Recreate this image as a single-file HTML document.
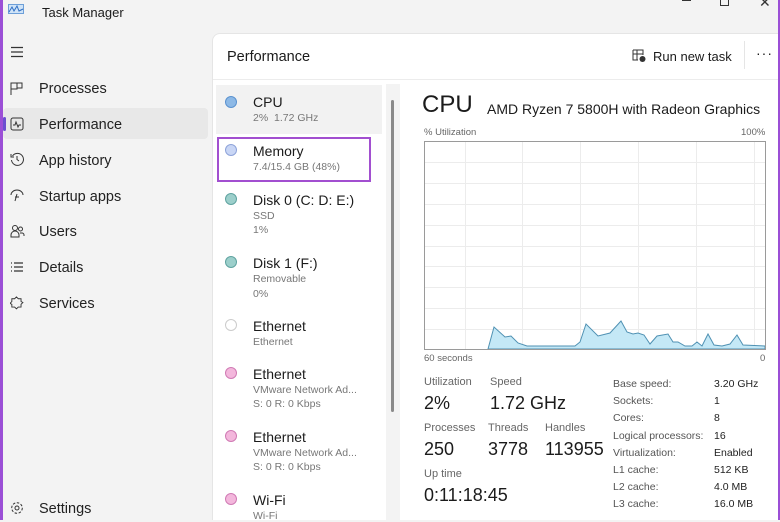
<!DOCTYPE html>
<html><head><meta charset="utf-8"><style>
*{margin:0;padding:0;box-sizing:border-box}
body{width:780px;height:520px;overflow:hidden;background:#f3f3f3;font-family:"Liberation Sans",sans-serif;color:#1b1b1b;position:relative}
.a{position:absolute;white-space:nowrap}
.nav{font-size:14.5px;color:#222}
.sub{font-size:10.5px;color:#777}
.it{font-size:14px;color:#1b1b1b}
.dot{position:absolute;width:12px;height:12px;border-radius:50%;left:225px}
.lbl{font-size:11px;color:#666}
.val{font-size:18px;color:#1b1b1b}
.k{font-size:10.5px;color:#555}
.v{font-size:10.5px;color:#222}
</style></head><body>
<div class="a" style="left:0;top:0;width:3px;height:520px;background:#9b4fd6"></div>
<div class="a" style="right:0;top:0;width:2px;height:520px;background:#9b4fd6"></div>
<!-- title bar -->
<svg class="a" style="left:8px;top:4px" width="16" height="10"><rect x="0.5" y="0.5" width="15" height="9" fill="#cfe3f7" stroke="#6d9fd8"/><path d="M1 8 L4 3 L6 7 L9 2 L11 7 L15 5" stroke="#2f6fc4" fill="none"/></svg>
<div class="a" style="left:42px;top:5px;font-size:13px">Task Manager</div>
<div class="a" style="left:682px;top:0;width:9px;height:1px;background:#333"></div>
<div class="a" style="left:720px;top:-3px;width:9px;height:9px;border:1px solid #333"></div>
<div class="a" style="left:759px;top:-6px;font-size:14px;color:#333">✕</div>
<!-- nav -->
<svg class="a" style="left:10px;top:46px" width="14" height="12"><path d="M1 1.5H13M1 6H13M1 10.5H13" stroke="#333" stroke-width="1.2"/></svg>
<div class="a" style="left:3px;top:108px;width:205px;height:31px;background:#e8e8e8;border-radius:4px"></div>
<div class="a" style="left:3px;top:117px;width:3px;height:14px;background:#6b4fd0;border-radius:2px"></div>
<svg class="a" style="left:10px;top:82px" width="14" height="14"><path d="M1 1h6v6H1zM7 1h5v5H7M1 7v6" stroke="#333" fill="none"/></svg>
<div class="a nav" style="left:39px;top:81px">Processes</div>
<svg class="a" style="left:10px;top:117px" width="14" height="14"><rect x="1" y="1" width="12" height="12" rx="2" stroke="#333" fill="none"/><path d="M3 8h2l1-3 2 5 1-2h2" stroke="#333" fill="none"/></svg>
<div class="a nav" style="left:39px;top:117px">Performance</div>
<svg class="a" style="left:10px;top:152px" width="14" height="14"><path d="M2.5 4A6 6 0 1 1 1.5 8M1 2v3h3M7 4v3.5l2 1.5" stroke="#333" fill="none"/></svg>
<div class="a nav" style="left:39px;top:153px">App history</div>
<svg class="a" style="left:10px;top:189px" width="14" height="14"><path d="M1 6A6 5 0 0 1 13 6M7 5l-2 7M5 8h4" stroke="#333" fill="none"/></svg>
<div class="a nav" style="left:39px;top:189px">Startup apps</div>
<svg class="a" style="left:10px;top:224px" width="15" height="14"><circle cx="5" cy="4" r="2.5" stroke="#333" fill="none"/><circle cx="10.5" cy="5" r="2" stroke="#333" fill="none"/><path d="M1 13v-2a3 3 0 0 1 8 0v2zM10 9h2a2 2 0 0 1 2 2v1" stroke="#333" fill="none"/></svg>
<div class="a nav" style="left:39px;top:224px">Users</div>
<svg class="a" style="left:10px;top:261px" width="14" height="12"><path d="M1 2h1M1 6h1M1 10h1M4 2h9M4 6h9M4 10h9" stroke="#333" stroke-width="1.2"/></svg>
<div class="a nav" style="left:39px;top:260px">Details</div>
<svg class="a" style="left:10px;top:296px" width="14" height="14"><path d="M7 1l2 2 3 0 0 3 2 1-2 2 0 3-3 0-2 2-2-2-3 0 0-3-2-1 2-2 0-3 3 0z" stroke="#333" fill="none" transform="scale(0.92)"/></svg>
<div class="a nav" style="left:39px;top:296px">Services</div>
<svg class="a" style="left:10px;top:501px" width="14" height="14"><circle cx="7" cy="7" r="2" stroke="#333" fill="none"/><circle cx="7" cy="7" r="5.3" stroke="#333" fill="none" stroke-dasharray="2.5 1.6"/></svg>
<div class="a nav" style="left:39px;top:501px">Settings</div>
<!-- content -->
<div class="a" style="left:212px;top:33px;width:566px;height:487px;background:#fff;border-radius:8px 0 0 0;border-left:1px solid #e5e5e5;border-top:1px solid #e5e5e5"></div>
<div class="a" style="left:227px;top:49px;font-size:14.5px">Performance</div>
<div class="a" style="left:213px;top:79px;width:565px;height:1px;background:#ececec"></div>
<svg class="a" style="left:632px;top:49px" width="15" height="14"><path d="M1 1h10v5M1 1v10h5M1 5h10M5 1v10" stroke="#333" fill="none"/><circle cx="10.5" cy="10" r="3" fill="#333"/></svg>
<div class="a" style="left:653px;top:49px;font-size:13px">Run new task</div>
<div class="a" style="left:744px;top:41px;width:1px;height:28px;background:#e5e5e5"></div>
<div class="a" style="left:756px;top:45px;font-size:14px;letter-spacing:1px">···</div>
<!-- list -->
<div class="a" style="left:386px;top:84px;width:14px;height:436px;background:#f3f3f3"></div>
<div class="a" style="left:391px;top:100px;width:3px;height:312px;background:#8a8a8a;border-radius:2px"></div>
<div class="a" style="left:216px;top:85px;width:166px;height:49px;background:#f2f2f2"></div>
<div class="dot" style="top:96px;background:#8db9e6;border:1px solid #5b92cf"></div>
<div class="a it" style="left:253px;top:94px">CPU</div>
<div class="a sub" style="left:253px;top:112px">2%&nbsp; 1.72 GHz</div>
<div class="a" style="left:217px;top:137px;width:154px;height:45px;border:2px solid #a24fd0"></div>
<div class="dot" style="top:144px;background:#c9d6f5;border:1px solid #8ea3d9"></div>
<div class="a it" style="left:253px;top:143px">Memory</div>
<div class="a sub" style="left:253px;top:161px">7.4/15.4 GB (48%)</div>
<div class="dot" style="top:193px;background:#9ccfcb;border:1px solid #5fa3a0"></div>
<div class="a it" style="left:253px;top:192px">Disk 0 (C: D: E:)</div>
<div class="a sub" style="left:253px;top:210px">SSD</div>
<div class="a sub" style="left:253px;top:224px">1%</div>
<div class="dot" style="top:256px;background:#9ccfcb;border:1px solid #5fa3a0"></div>
<div class="a it" style="left:253px;top:255px">Disk 1 (F:)</div>
<div class="a sub" style="left:253px;top:273px">Removable</div>
<div class="a sub" style="left:253px;top:288px">0%</div>
<div class="dot" style="top:319px;background:#fff;border:1px solid #ccc"></div>
<div class="a it" style="left:253px;top:318px">Ethernet</div>
<div class="a sub" style="left:253px;top:336px">Ethernet</div>
<div class="dot" style="top:367px;background:#f3b7dc;border:1px solid #d07ab4"></div>
<div class="a it" style="left:253px;top:366px">Ethernet</div>
<div class="a sub" style="left:253px;top:384px">VMware Network Ad...</div>
<div class="a sub" style="left:253px;top:398px">S: 0 R: 0 Kbps</div>
<div class="dot" style="top:430px;background:#f3b7dc;border:1px solid #d07ab4"></div>
<div class="a it" style="left:253px;top:429px">Ethernet</div>
<div class="a sub" style="left:253px;top:447px">VMware Network Ad...</div>
<div class="a sub" style="left:253px;top:461px">S: 0 R: 0 Kbps</div>
<div class="dot" style="top:493px;background:#f3b7dc;border:1px solid #d07ab4"></div>
<div class="a it" style="left:253px;top:492px">Wi-Fi</div>
<div class="a sub" style="left:253px;top:510px">Wi-Fi</div>
<!-- detail -->
<div class="a" style="left:422px;top:91px;font-size:24px">CPU</div>
<div class="a" style="left:487px;top:101px;font-size:14px">AMD Ryzen 7 5800H with Radeon Graphics</div>
<div class="a" style="left:424px;top:127px;font-size:9.5px;color:#666">% Utilization</div>
<div class="a" style="left:741px;top:127px;font-size:9.5px;color:#666">100%</div>
<svg class="a" style="left:0;top:0" width="780" height="520">
<g stroke="#ececec" stroke-width="1">
<path d="M465.5 141V350M522.5 141V350M580.5 141V350M638.5 141V350M696.5 141V350M754.5 141V350"/>
<path d="M425 162.5H765M425 183.5H765M425 204.5H765M425 225.5H765M425 246.5H765M425 266.5H765M425 287.5H765M425 308.5H765M425 329.5H765"/>
</g>
<path d="M488 349L494 327L505 337L511 336L518 343L527 346L542 346L552 346L575 346L580 342L586 324L598 336L610 333L621 321L627 332L633 334L638 333L644 335L650 344L657 336L668 334L673 342L678 342L685 346L692 346L697 342L702 346L708 334L714 345L722 346L730 344L737 335L743 345L765 346L765 349Z" fill="#c4e8f6" stroke="#4f91b3" stroke-width="1"/>
<rect x="424.5" y="141.5" width="341" height="208" fill="none" stroke="#9a9a9a"/>
</svg>
<div class="a" style="left:424px;top:353px;font-size:9.5px;color:#666">60 seconds</div>
<div class="a" style="left:760px;top:353px;font-size:9.5px;color:#666">0</div>
<div class="a lbl" style="left:424px;top:376px">Utilization</div>
<div class="a lbl" style="left:490px;top:376px">Speed</div>
<div class="a val" style="left:424px;top:393px">2%</div>
<div class="a val" style="left:490px;top:393px">1.72 GHz</div>
<div class="a lbl" style="left:424px;top:422px">Processes</div>
<div class="a lbl" style="left:488px;top:422px">Threads</div>
<div class="a lbl" style="left:545px;top:422px">Handles</div>
<div class="a val" style="left:424px;top:439px">250</div>
<div class="a val" style="left:488px;top:439px">3778</div>
<div class="a val" style="left:545px;top:439px">113955</div>
<div class="a lbl" style="left:424px;top:468px">Up time</div>
<div class="a val" style="left:424px;top:485px">0:11:18:45</div>
<div class="a k" style="left:613px;top:376px;line-height:17.2px">Base speed:<br>Sockets:<br>Cores:<br>Logical processors:<br>Virtualization:<br>L1 cache:<br>L2 cache:<br>L3 cache:</div>
<div class="a v" style="left:714px;top:376px;line-height:17.2px">3.20 GHz<br>1<br>8<br>16<br>Enabled<br>512 KB<br>4.0 MB<br>16.0 MB</div>
</body></html>
